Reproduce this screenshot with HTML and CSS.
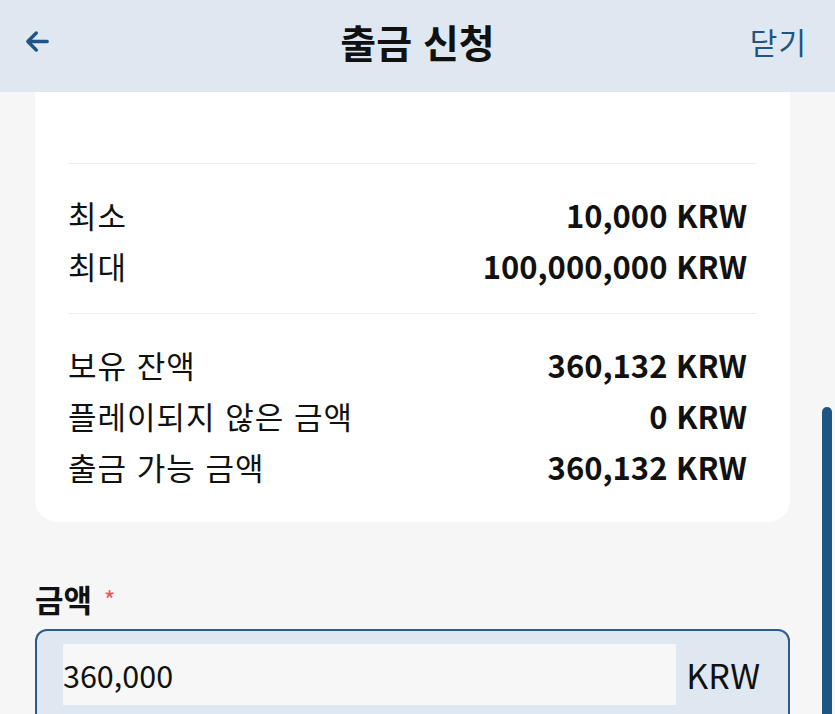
FILE: index.html
```html
<!DOCTYPE html>
<html lang="ko">
  <head>
    <meta charset="UTF-8" />
    <meta name="viewport" content="width=device-width, initial-scale=1.0" />
    <title>출금 신청</title>
    <link rel="stylesheet" href="styles.css">
  </head>
  <body>
    <header class="topbar">
      <button class="back-btn" aria-label="뒤로">
        <svg width="29" height="29" viewBox="0 0 24 24" fill="none" stroke="currentColor" stroke-width="2.8" stroke-linecap="round" stroke-linejoin="round">
          <path d="M20 12H4.5" />
          <path d="M11 5l-7 7 7 7" />
        </svg>
      </button>
      <h1>출금 신청</h1>
      <a class="close-link" href="#">닫기</a>
    </header>

    <main class="content">
      <div class="limit-card">
        <div class="card-top"></div>

        <div class="group">
          <div class="row"><span>최소</span><strong>10,000 KRW</strong></div>
          <div class="row"><span>최대</span><strong>100,000,000 KRW</strong></div>
        </div>

        <div class="group">
          <div class="row"><span>보유 잔액</span><strong>360,132 KRW</strong></div>
          <div class="row"><span>플레이되지 않은 금액</span><strong>0 KRW</strong></div>
          <div class="row"><span>출금 가능 금액</span><strong>360,132 KRW</strong></div>
        </div>
      </div>

      <div class="amount-field">
        <label for="amount">금액 <span class="required">*</span></label>
        <div class="amount-box">
          <input type="text" id="amount" value="360,000" />
          <span class="currency">KRW</span>
        </div>
      </div>
    </main>

    <div class="scrollbar"></div>
  </body>
</html>
```

FILE: styles.css
```css
:root {
  --navy: #1f5584;
  --header-bg: #dfe8f0;
  --page-bg: #f6f6f7;
  --text: #111111;
  --line: #eeeeee;
}

html,
body {
  height: 100%;
}

body {
  margin: 0;
  font-family: "Noto Sans CJK KR", "Noto Sans", sans-serif;
  background-color: var(--page-bg);
  color: var(--text);
  overflow: hidden;
  position: relative;
}

.topbar {
  height: 92px;
  box-sizing: border-box;
  display: flex;
  align-items: center;
  justify-content: space-between;
  padding: 0 28px 10px 23px;
  background-color: var(--header-bg);
  position: relative;
}

.back-btn {
  background: none;
  border: none;
  padding: 0;
  color: var(--navy);
  display: flex;
  cursor: pointer;
}

.topbar h1 {
  position: absolute;
  top: 0;
  left: 0;
  right: 0;
  margin: 0;
  line-height: 82px;
  text-align: center;
  font-size: 39px;
  font-weight: 700;
  pointer-events: none;
}

.close-link {
  color: var(--navy);
  text-decoration: none;
  font-size: 30px;
  font-weight: 400;
  letter-spacing: 1px;
}

.content {
  padding: 0 45px 0 35px;
}

.limit-card {
  background-color: white;
  border-radius: 0 0 22px 22px;
  padding: 0 33px 8px 33px;
}

.card-top {
  height: 71px;
}

.group {
  border-top: 1.5px solid var(--line);
  padding: 25px 0 22px;
}

.row {
  display: flex;
  justify-content: space-between;
  align-items: center;
  height: 51px;
  font-size: 31px;
}

.row span {
  letter-spacing: 1px;
}

.row strong {
  font-weight: 700;
  margin-right: 10px;
}

.amount-field {
  margin-top: 57px;
}

.amount-field label {
  display: block;
  font-size: 31px;
  line-height: 40px;
  font-weight: 700;
  margin-bottom: 10px;
}

.required {
  color: #e85a5a;
  font-size: 25px;
  font-weight: 400;
  vertical-align: top;
  margin-left: 3px;
}

.amount-box {
  display: flex;
  align-items: center;
  gap: 10px;
  border: 2px solid #2c5c86;
  border-radius: 12px;
  background-color: var(--header-bg);
  padding: 13px 28px 20px 26px;
}

.amount-box input {
  flex: 1;
  min-width: 0;
  height: 61px;
  border: none;
  outline: none;
  background-color: #f7f7f7;
  font-family: inherit;
  font-size: 30.5px;
  color: var(--text);
  padding: 0;
}

.currency {
  font-size: 34px;
}

.scrollbar {
  position: absolute;
  right: 3px;
  top: 407px;
  width: 10px;
  height: 320px;
  border-radius: 5px;
  background-color: var(--navy);
}
```
